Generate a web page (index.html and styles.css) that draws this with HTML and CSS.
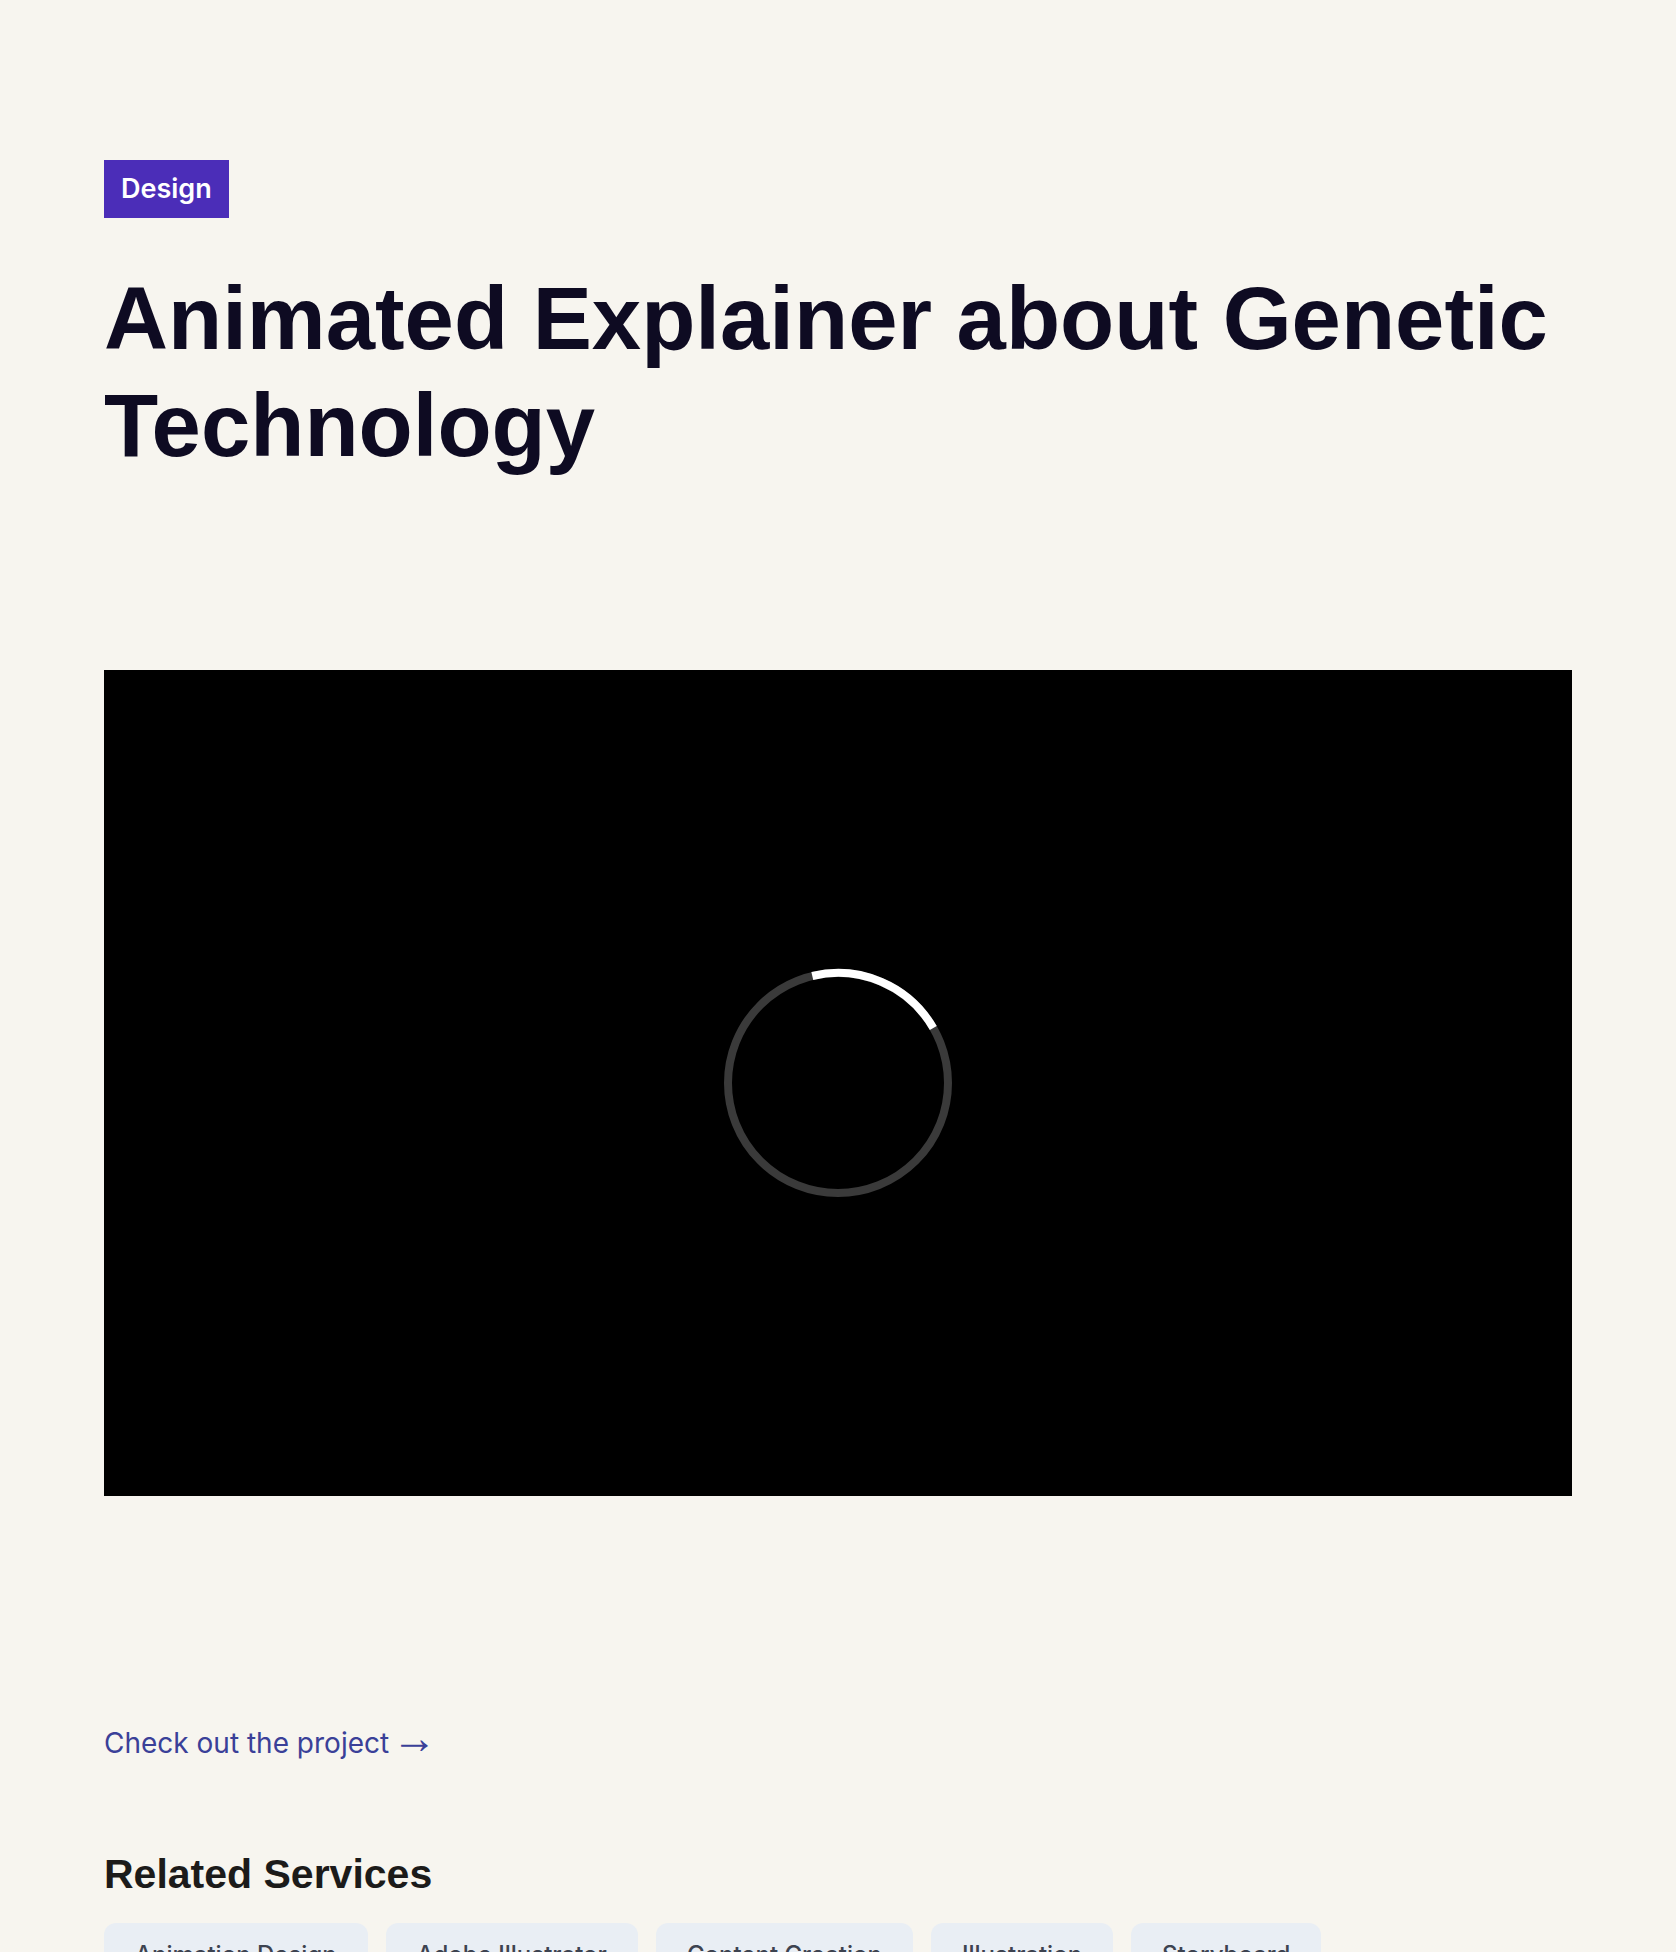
FILE: index.html
```html
<!DOCTYPE html>
<html lang="en">
<head>
    <meta charset="UTF-8">
    <meta name="viewport" content="width=device-width, initial-scale=1.0">
    <title>Animated Explainer about Genetic Technology</title>
    <link rel="stylesheet" href="styles.css">
</head>
<body>

    <main class="project">
        <div class="project-head">
            <span class="tag">Design</span>
            <h1>Animated Explainer about Genetic Technology</h1>
        </div>

        <!-- Video player, still loading -->
        <div class="video">
            <svg class="spinner" width="240" height="240" viewBox="0 0 240 240">
                <circle cx="120" cy="120" r="110" fill="none" stroke="#3a3a3a" stroke-width="8"/>
                <path d="M94.3 13 A110 110 0 0 1 215.3 65" fill="none" stroke="#ffffff" stroke-width="8"/>
            </svg>
        </div>

        <a class="project-link" href="#">Check out the project <span class="arrow">→</span></a>

        <section class="related">
            <h2>Related Services</h2>
            <ul class="chips">
                <li><a href="#">Animation Design</a></li>
                <li><a href="#">Adobe Illustrator</a></li>
                <li><a href="#">Content Creation</a></li>
                <li><a href="#">Illustration</a></li>
                <li><a href="#">Storyboard</a></li>
            </ul>
        </section>
    </main>

</body>
</html>
```

FILE: styles.css
```css
body {
    margin: 0;
    padding: 0;
    background-color: #f7f5ef;
    font-family: Inter, "Liberation Sans", sans-serif;
}

.project {
    width: 1468px;
    margin: 0 auto;
    padding-top: 160px;
}

.tag {
    display: inline-block;
    background-color: #4b2db8;
    color: white;
    font-size: 27px;
    font-weight: 600;
    line-height: 34px;
    padding: 12px 17px;
}

h1 {
    margin: 47px 0 0 0;
    font-family: "Liberation Sans", Arial, sans-serif;
    font-size: 88.7px;
    font-weight: bold;
    line-height: 107px;
    color: #0e0b22;
}

.video {
    margin-top: 191px;
    aspect-ratio: 16 / 9;
    background-color: black;
    display: flex;
    align-items: center;
    justify-content: center;
}

.project-link {
    display: inline-block;
    margin-top: 227px;
    font-size: 28px;
    line-height: 40px;
    color: #3a4098;
    text-decoration: none;
}

/* longer, thinner arrow than the one in Inter */
.project-link .arrow {
    font-family: "Liberation Sans", sans-serif;
    font-size: 1.6em;
    line-height: 0;
    margin-left: -5px;
}

.related h2 {
    margin: 87px 0 0 0;
    font-family: "Liberation Sans", Arial, sans-serif;
    font-size: 41px;
    font-weight: bold;
    line-height: 49px;
    color: #1c1b1a;
}

.chips {
    list-style: none;
    margin: 24px 0 0 0;
    padding: 0;
    display: flex;
    gap: 18px;
}

.chips a {
    display: block;
    background-color: #e9eef4;
    border-radius: 12px;
    padding: 16px 31px;
    font-size: 24px;
    font-weight: 500;
    line-height: 32px;
    color: #3d4350;
    text-decoration: none;
}
```
